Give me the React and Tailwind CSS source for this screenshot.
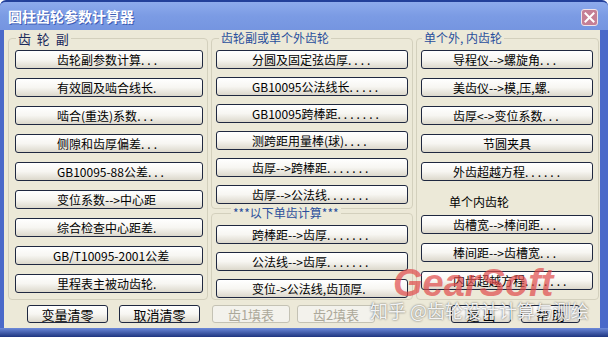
import React from "react";

const FONT = { fontFamily: '"Noto Sans CJK SC", "Noto Sans", sans-serif' };

function Label({ text }) {
  const m = text.match(/^(.*?)(\.+)$/);
  if (!m) return <span>{text}</span>;
  return (
    <span>
      {m[1]}
      <span className="tracking-[3px]">{m[2]}</span>
    </span>
  );
}

function Btn({ text, pad = "pl-[41px]", center = false }) {
  return (
    <div
      className={`h-[19px] w-full shrink-0 rounded-[3px] border border-[#1f2840] bg-linear-to-b from-white via-[#f7f6f2] to-[#dcd8cc] text-[12px] leading-none text-black flex items-center whitespace-nowrap ${
        center ? "justify-center" : pad
      }`}
    >
      <Label text={text} />
    </div>
  );
}

function Group({ label, labelClass, className, children }) {
  return (
    <div className={`relative rounded-[4px] border border-[#d3d0bd] ${className}`}>
      <div className={`absolute top-[-7px] bg-[#ece9d8] px-[2px] leading-none whitespace-nowrap ${labelClass}`}>
        {label}
      </div>
      {children}
    </div>
  );
}

function BottomBtn({ text, w, ml, disabled }) {
  return (
    <div
      className={`h-[18px] shrink-0 rounded-[3px] border flex items-center justify-center text-[13px] leading-none whitespace-pre ${w} ${ml} ${
        disabled
          ? "border-[#c4c2b4] bg-[#f3f2ec] text-[#aca899]"
          : "border-[#1f2840] bg-linear-to-b from-white via-[#f7f6f2] to-[#dcd8cc] text-black"
      }`}
    >
      {text}
    </div>
  );
}

export default function App() {
  const left = [
    "齿轮副参数计算...",
    "有效圆及啮合线长.",
    "啮合(重迭)系数...",
    "侧隙和齿厚偏差...",
    "GB10095-88公差...",
    "变位系数-->中心距",
    "综合检查中心距差.",
    "GB/T10095-2001公差",
    "里程表主被动齿轮.",
  ];
  const midTop = [
    "分圆及固定弦齿厚....",
    "GB10095公法线长.....",
    "GB10095跨棒距.......",
    "测跨距用量棒(球)....",
    "齿厚-->跨棒距.......",
    "齿厚-->公法线.......",
  ];
  const midBottom = ["跨棒距-->齿厚.......", "公法线-->齿厚.......", "变位->公法线,齿顶厚."];
  const rightTop = ["导程仪-->螺旋角...", "美齿仪-->模,压,螺.", "齿厚<->变位系数...", "节圆夹具", "外齿超越方程......"];
  const rightBottom = ["齿槽宽-->棒间距...", "棒间距-->齿槽宽...", "内齿超越方程......."];

  return (
    <div
      className="relative w-[608px] h-[337px] overflow-hidden flex flex-col bg-[#4a69c9] rounded-t-[6px] border-t-2 border-[#23409a]"
      style={FONT}
    >
      {/* Title bar */}
      <div className="h-[28px] shrink-0 flex items-center bg-linear-to-b from-[#8eabec] via-[#7b9be4] to-[#7595e0] pl-[8px]">
        <span className="text-white font-bold text-[14px] leading-none [text-shadow:1px_1px_0_#3d5cb5]">
          圆柱齿轮参数计算器
        </span>
        <div className="ml-auto mr-[10px] mt-[2px] w-[17px] h-[17px] rounded-[3px] border border-[#efe3e8] bg-[#c57f95] flex items-center justify-center">
          <svg width="11" height="11" viewBox="0 0 11 11">
            <path d="M1.5 1.5 L9.5 9.5 M9.5 1.5 L1.5 9.5" stroke="white" strokeWidth="2" strokeLinecap="square" />
          </svg>
        </div>
      </div>

      {/* Body */}
      <div className="ml-[4px] mr-[8px] h-[298px] shrink-0 bg-[#ece9d8] flex flex-col">
        <div className="flex pt-[8px]">
          {/* Left group */}
          <Group
            label="齿  轮  副"
            labelClass="left-[7px] text-[13px] text-[#1b2a5c] whitespace-pre"
            className="ml-[4px] w-[200px] h-[262px] pt-[11px] pl-[6px] pr-[4px] flex flex-col gap-[9px]"
          >
            {left.map((t) => (
              <Btn key={t} text={t} pad={t.startsWith("GB/T") ? "pl-[37px]" : "pl-[41px]"} />
            ))}
          </Group>

          {/* Middle groups */}
          <div className="ml-[3px] w-[202px] flex flex-col gap-[4px]">
            <Group
              label="齿轮副或单个外齿轮"
              labelClass="left-[7px] text-[12px] text-[#2a4f9c]"
              className="h-[171px] pt-[11px] px-[4px] flex flex-col gap-[8px]"
            >
              {midTop.map((t) => (
                <Btn key={t} text={t} pad="pl-[35px]" />
              ))}
            </Group>
            <Group
              label="***以下单齿计算***"
              labelClass="left-[19px] text-[12px] text-[#2a4f9c]"
              className="h-[87px] pt-[11px] px-[4px] flex flex-col gap-[8px]"
            >
              {midBottom.map((t) => (
                <Btn key={t} text={t} pad="pl-[35px]" />
              ))}
            </Group>
          </div>

          {/* Right group */}
          <Group
            label="单个外, 内齿轮"
            labelClass="left-[5px] text-[12px] text-[#2a4f9c] whitespace-pre"
            className="ml-[3px] w-[183px] h-[262px] pt-[11px] pl-[4px] pr-[5px] flex flex-col"
          >
            <div className="flex flex-col gap-[9px]">
              {rightTop.map((t) => (
                <Btn key={t} text={t} pad="pl-[31px]" center={t === "节圆夹具"} />
              ))}
            </div>
            <div className="mt-[15px] ml-[28px] text-[12px] leading-none text-black">单个内齿轮</div>
            <div className="mt-[7px] flex flex-col gap-[9px]">
              {rightBottom.map((t) => (
                <Btn key={t} text={t} pad="pl-[31px]" />
              ))}
            </div>
          </Group>
        </div>

        {/* Bottom buttons */}
        <div className="flex mt-[5px]">
          <BottomBtn text="变量清零" w="w-[81px]" ml="ml-[23px]" />
          <BottomBtn text="取消清零" w="w-[81px]" ml="ml-[11px]" />
          <BottomBtn text="齿1填表" w="w-[78px]" ml="ml-[12px]" disabled />
          <BottomBtn text="齿2填表" w="w-[78px]" ml="ml-[7px]" disabled />
          <BottomBtn text="退 出" w="w-[60px]" ml="ml-[76px]" />
          <BottomBtn text="帮 助" w="w-[59px]" ml="ml-[10px]" />
        </div>
      </div>
      <div className="flex-1 bg-linear-to-b from-[#6d8ada] to-[#1f3580]" />

      {/* Watermarks */}
      <div
        className="absolute left-[393px] top-[262px] text-[38px] leading-none font-bold italic text-[#e04848]/70 whitespace-nowrap"
        style={{ fontFamily: '"Liberation Sans", sans-serif' }}
      >
        GearSoft
      </div>
      <div className="absolute left-[370px] top-[299px] text-[18px] leading-none text-white/90 whitespace-nowrap [text-shadow:0_0_2px_rgba(60,60,60,0.9)]">
        知乎 @齿轮设计计算与测绘
      </div>
    </div>
  );
}
